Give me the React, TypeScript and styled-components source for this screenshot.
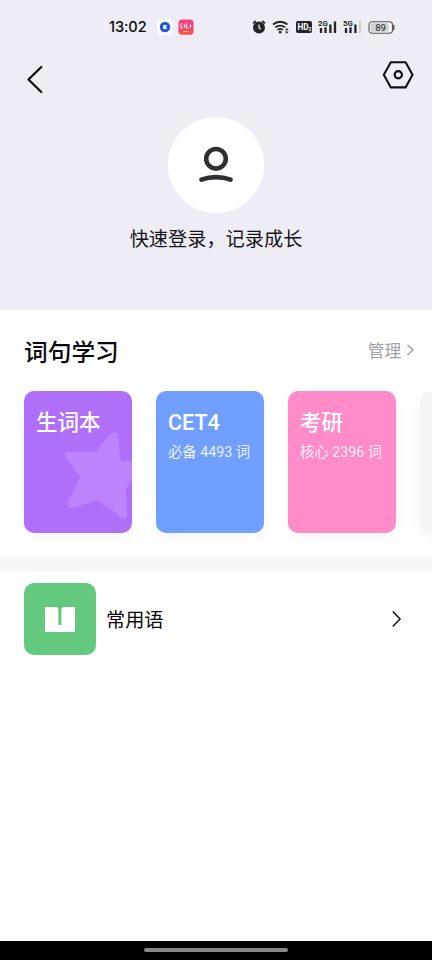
import React from 'react';
import styled, { createGlobalStyle } from 'styled-components';

const GlobalStyle = createGlobalStyle`
  * { box-sizing: border-box; }
  body {
    margin: 0;
    background: #fff;
    font-family: Roboto, "Noto Sans CJK SC", sans-serif;
    color: #0a0a0c;
  }
  svg { display: block; flex: none; }
`;

const Screen = styled.div`
  width: 432px;
  height: 960px;
  display: flex;
  flex-direction: column;
  overflow: hidden;
  background: #fff;
`;

const Header = styled.header`
  height: 310px;
  flex: none;
  background: #eeedf5;
  display: flex;
  flex-direction: column;
`;

const StatusBar = styled.div`
  height: 54px;
  display: flex;
  align-items: center;
  justify-content: space-between;
  padding: 0 37px 0 109px;
`;

const StatusGroup = styled.div<{ $gap: number }>`
  display: flex;
  align-items: center;
  gap: ${(p) => p.$gap}px;
`;

const Clock = styled.span`
  font: 500 14.6px/20px Inter, sans-serif;
  letter-spacing: -0.1px;
  width: 40px;
  margin-right: 4px;
  white-space: nowrap;
`;

const NavBar = styled.div`
  height: 50px;
  display: flex;
  justify-content: space-between;
  padding: 6px 18px 0 26px;
`;

const Profile = styled.div`
  display: flex;
  flex-direction: column;
  align-items: center;
  padding-top: 13px;
`;

const Avatar = styled.div`
  width: 96px;
  height: 96px;
  border-radius: 50%;
  background: #fff;
  display: grid;
  place-items: center;
`;

const LoginText = styled.div`
  margin-top: 13px;
  font-size: 19.2px;
  line-height: 28px;
  color: #16161a;
`;

const SectionHead = styled.div`
  height: 81px;
  flex: none;
  display: flex;
  align-items: center;
  justify-content: space-between;
  padding: 5px 17px 0 24px;
`;

const SectionTitle = styled.h2`
  margin: 0;
  font-size: 23.7px;
  font-weight: 500;
  line-height: 32px;
`;

const Manage = styled.div`
  display: flex;
  align-items: center;
  gap: 5px;
  font-size: 16.6px;
  line-height: 24px;
  color: #a0a0a5;
  margin-top: -3px;

  svg { margin-top: -3px; }
`;

const Cards = styled.div`
  display: flex;
  gap: 24px;
  height: 165px;
  padding-left: 24px;
  flex: none;
  overflow: hidden;
`;

const Card = styled.div<{ $bg: string }>`
  position: relative;
  flex: none;
  width: 108px;
  height: 142px;
  border-radius: 10px;
  background: ${(p) => p.$bg};
  box-shadow: 0 4px 14px rgba(0, 0, 0, 0.045);
  padding: 17px 0 0 12px;
  color: #fff;
  white-space: nowrap;
`;

const CardTitle = styled.div`
  position: relative;
  z-index: 1;
  font-size: 21.5px;
  font-weight: 500;
  line-height: 30px;
`;

const CardNote = styled.div`
  font-size: 14.3px;
  line-height: 20px;
  margin-top: 4px;
  color: rgba(255, 255, 255, 0.88);
`;

const Star = styled.svg`
  position: absolute;
  left: 0;
  top: 0;
`;

const Divider = styled.div`
  height: 15px;
  flex: none;
  background: #f7f7f8;
`;

const Row = styled.div`
  display: flex;
  align-items: center;
  padding: 12px 30px 0 24px;
`;

const RowIcon = styled.div`
  width: 72px;
  height: 72px;
  border-radius: 10px;
  background: #62c97e;
  display: grid;
  place-items: center;
`;

const RowLabel = styled.div`
  flex: 1;
  margin-left: 10px;
  padding-top: 4px;
  font-size: 19.2px;
  line-height: 28px;
`;

const GestureBar = styled.div`
  height: 19px;
  margin-top: auto;
  flex: none;
  background: #000;
  display: flex;
  justify-content: center;
  padding-top: 7px;
`;

const Handle = styled.div`
  width: 144px;
  height: 4px;
  border-radius: 2px;
  background: #858585;
`;

const ink = '#242428';

const Signal = ({ label, weak }: { label: string; weak?: boolean }) => (
  <svg width="19" height="14" viewBox="0 0 19 14">
    <text x="0" y="6.2" fontSize="7.8" fontWeight="700" fontFamily="Roboto, sans-serif" fill={ink}>{label}</text>
    <path d="M3 8v5M7.5 7.3V13M12.4 4.5V13" stroke={ink} strokeWidth="2.3" />
    <path d="M17 1.5V13" stroke={weak ? '#d0d0d6' : ink} strokeWidth="2.3" />
  </svg>
);

const cards = [
  { title: '生词本', note: '', bg: '#b06ff8', star: true },
  { title: 'CET4', note: '必备 4493 词', bg: '#709fff', star: false },
  { title: '考研', note: '核心 2396 词', bg: '#ff8bc9', star: false },
  { title: '', note: '', bg: '#f5f5f8', star: false },
];

export default function App() {
  return (
    <Screen>
      <GlobalStyle />
      <Header>
        <StatusBar>
          <StatusGroup $gap={4}>
            <Clock>13:02</Clock>
            <svg width="16" height="16" viewBox="0 0 16 16">
              <rect width="16" height="16" rx="4" fill="#fafaff" />
              <circle cx="8" cy="8" r="3.7" fill="none" stroke="#2356cf" strokeWidth="3" />
              <path d="M8.5 7.5h2.5v3z" fill="#2356cf" />
            </svg>
            <svg width="17" height="16" viewBox="0 0 17 16">
              <rect x="1.5" y="0.5" width="15" height="15" rx="3.5" fill="#ef4779" />
              <path d="M1.5 11h15v1a3.5 3.5 0 0 1-3.5 3.5H5A3.5 3.5 0 0 1 1.5 12z" fill="#f5534c" />
              <path d="M4 4v5h2M7.5 5v4M9.5 4v5h2M13.5 5v4M7 7h2M12 7h2" fill="none" stroke="#ffc9dc" strokeWidth="1.2" />
              <path d="M6 12.5h6" stroke="#ffac72" strokeWidth="1" />
            </svg>
          </StatusGroup>
          <StatusGroup $gap={6}>
            <svg width="14" height="14" viewBox="0 0 14 14">
              <circle cx="7" cy="7.6" r="6" fill={ink} />
              <path d="M1 3.4L3.8 1M13 3.4L10.2 1" stroke={ink} strokeWidth="1.8" />
              <path d="M7 4.5v3.3l1.8 1.4" fill="none" stroke="#eeedf5" strokeWidth="1.3" />
            </svg>
            <svg width="18" height="14" viewBox="0 0 18 14">
              <path d="M1 4.5a11 11 0 0 1 14.5 0M3.3 7.4a7.4 7.4 0 0 1 9.8 0M5.6 10a4 4 0 0 1 5.2 0" fill="none" stroke={ink} strokeWidth="1.8" />
              <circle cx="8.2" cy="12.2" r="1.4" fill={ink} />
              <path d="M13 10.3l1.8-2.2 1.8 2.2zM13 11.5h3.6l-1.8 2.2z" fill={ink} />
            </svg>
            <svg width="16" height="12" viewBox="0 0 16 12">
              <rect width="16" height="12" rx="2" fill={ink} />
              <text x="1.4" y="8.9" fontSize="8.2" fontWeight="700" fontFamily="Roboto, sans-serif" fill="#fff">HD</text>
              <text x="12.6" y="9.8" fontSize="5" fontWeight="700" fontFamily="Roboto, sans-serif" fill="#fff">2</text>
            </svg>
            <Signal label="2G" />
            <Signal label="5G" weak />
            <svg width="27" height="13" viewBox="0 0 27 13">
              <rect x="1" y="0.7" width="23.5" height="11.6" rx="3.2" fill="#f3f3f7" stroke="#55555a" strokeWidth="1.1" />
              <rect x="2.6" y="2.2" width="18" height="8.6" rx="1.8" fill="#cfcfd4" />
              <path d="M25.8 4.5v4" stroke="#45454a" strokeWidth="1.3" strokeLinecap="round" />
              <text x="7.2" y="9.9" fontSize="9.6" fontWeight="400" fontFamily="Roboto, sans-serif" fill={ink}>89</text>
            </svg>
          </StatusGroup>
        </StatusBar>
        <NavBar>
          <svg width="18" height="40" viewBox="0 0 18 40">
            <path d="M15.3 7L2.5 19.5 15.3 32" fill="none" stroke="#050505" strokeWidth="2.2" strokeLinecap="round" strokeLinejoin="round" />
          </svg>
          <svg width="32" height="30" viewBox="0 0 32 30">
            <path d="M8.8 2.2h14.8L30.5 14.7 23.6 27.4H8.8L1.8 14.7z" fill="none" stroke="#101014" strokeWidth="2.1" strokeLinejoin="round" />
            <circle cx="16.3" cy="14.8" r="3.6" fill="none" stroke="#101014" strokeWidth="2.2" />
          </svg>
        </NavBar>
        <Profile>
          <Avatar>
            <svg width="36" height="38" viewBox="0 0 36 38">
              <circle cx="18" cy="12.8" r="9.8" fill="none" stroke="#303034" strokeWidth="4.6" />
              <path d="M3.4 33.6Q18 28.6 32.6 33.6" fill="none" stroke="#303034" strokeWidth="4.6" strokeLinecap="round" />
            </svg>
          </Avatar>
          <LoginText>快速登录，记录成长</LoginText>
        </Profile>
      </Header>
      <SectionHead>
        <SectionTitle>词句学习</SectionTitle>
        <Manage>
          管理
          <svg width="9" height="14" viewBox="0 0 9 14">
            <path d="M1.5 2L7 7 1.5 12" fill="none" stroke="#a0a0a5" strokeWidth="1.5" />
          </svg>
        </Manage>
      </SectionHead>
      <Cards>
        {cards.map((c) => (
          <Card key={c.bg} $bg={c.bg}>
            {c.star && (
              <Star width="108" height="142" viewBox="0 0 108 142">
                <path d="M72 61L86 43Q90 39 94 44L97 70H108V88L102 98 103 125Q102 129 98 127L73 109 49 117Q43 117 44 111L56 87 41 65Q40 61 44 61Z" fill="#bd83fc" />
              </Star>
            )}
            <CardTitle>{c.title}</CardTitle>
            {c.note && <CardNote>{c.note}</CardNote>}
          </Card>
        ))}
      </Cards>
      <Divider />
      <Row>
        <RowIcon>
          <svg width="30" height="26" viewBox="0 0 30 26">
            <path d="M0 1H11Q13.4 1 13.4 3.5V19H16.4V3.5Q16.4 1 19 1H30V26H0Z" fill="#fff" />
          </svg>
        </RowIcon>
        <RowLabel>常用语</RowLabel>
        <svg width="11" height="18" viewBox="0 0 11 18">
          <path d="M1.8 1.5L9 9 1.8 16.5" fill="none" stroke="#17171a" strokeWidth="1.6" />
        </svg>
      </Row>
      <GestureBar>
        <Handle />
      </GestureBar>
    </Screen>
  );
}
